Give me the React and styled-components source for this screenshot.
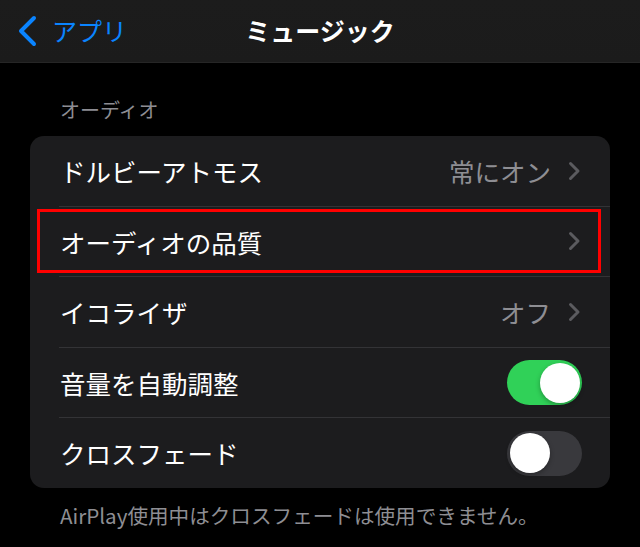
import React, { useState } from "react";
import styled, { createGlobalStyle } from "styled-components";

const GlobalStyle = createGlobalStyle`
  html, body {
    margin: 0;
    padding: 0;
    background: #000;
  }
  body {
    font-family: "Noto Sans CJK JP", "Noto Sans", sans-serif;
    -webkit-font-smoothing: antialiased;
  }
`;

const rows = [
  { label: "ドルビーアトモス", value: "常にオン", type: "link" },
  { label: "オーディオの品質", type: "link", highlight: true },
  { label: "イコライザ", value: "オフ", type: "link" },
  { label: "音量を自動調整", type: "toggle", on: true },
  { label: "クロスフェード", type: "toggle", on: false },
];

const Chevron = () => (
  <svg width="13" height="20" viewBox="0 0 13 20">
    <polyline
      points="2.5,2.5 10,10 2.5,17.5"
      fill="none"
      stroke="#5b5b5f"
      strokeWidth="3"
      strokeLinecap="round"
      strokeLinejoin="round"
    />
  </svg>
);

const BackChevron = () => (
  <svg width="22" height="32" viewBox="0 0 22 32">
    <polyline
      points="18,3 5,16 18,29"
      fill="none"
      stroke="#0a84ff"
      strokeWidth="4"
      strokeLinecap="round"
      strokeLinejoin="round"
    />
  </svg>
);

const App = () => {
  const [toggles, setToggles] = useState({ 3: true, 4: false });

  return (
    <>
      <GlobalStyle />
      <Page>
        <NavBar>
          <BackButton>
            <BackChevron />
            <span>アプリ</span>
          </BackButton>
          <Title>ミュージック</Title>
        </NavBar>

        <SectionHeader>オーディオ</SectionHeader>
        <Card>
          {rows.map((row, i) => (
            <React.Fragment key={row.label}>
              {i > 0 && <Separator />}
              <Row>
                <Label>{row.label}</Label>
                {row.type === "link" ? (
                  <Accessory>
                    {row.value && <Value>{row.value}</Value>}
                    <Chevron />
                  </Accessory>
                ) : (
                  <Toggle
                    $on={toggles[i]}
                    onClick={() => setToggles({ ...toggles, [i]: !toggles[i] })}
                  >
                    <Knob $on={toggles[i]} />
                  </Toggle>
                )}
                {row.highlight && <Highlight />}
              </Row>
            </React.Fragment>
          ))}
        </Card>
        <Footer>AirPlay使用中はクロスフェードは使用できません。</Footer>
      </Page>
    </>
  );
};

export default App;

const Page = styled.div`
  width: 640px;
  height: 547px;
  background: #000;
  overflow: hidden;
`;

const NavBar = styled.div`
  position: relative;
  height: 62px;
  display: flex;
  align-items: center;
  justify-content: center;
  background: linear-gradient(180deg, #1c1c1c 0%, #1b1b1b 100%);
  border-bottom: 1px solid #262626;
`;

const BackButton = styled.div`
  position: absolute;
  left: 16px;
  top: 0;
  bottom: 0;
  display: flex;
  align-items: center;
  gap: 14px;
  color: #0a84ff;
  font-size: 25px;

  span {
    line-height: 1;
    padding-bottom: 2px;
  }
`;

const Title = styled.div`
  color: #fff;
  font-size: 25px;
  font-weight: 700;
  padding-bottom: 2px;
`;

const SectionHeader = styled.div`
  padding: 35px 0 0 60px;
  height: 24px;
  line-height: 24px;
  font-size: 20px;
  color: #8d8d93;
  margin-bottom: 14px;
`;

const Card = styled.div`
  margin: 0 30px;
  background: #1c1c1e;
  border-radius: 14px;
  overflow: hidden;
`;

const Separator = styled.div`
  height: 1px;
  margin-left: 29px;
  background: #333336;
`;

const Row = styled.div`
  position: relative;
  height: 69.6px;
  display: flex;
  align-items: center;
  justify-content: space-between;
  padding: 0 28px 0 30px;
`;

const Label = styled.div`
  color: #fff;
  font-size: 25.5px;
  line-height: 1;
`;

const Accessory = styled.div`
  display: flex;
  align-items: center;
  gap: 17px;
  padding-right: 1px;
`;

const Value = styled.span`
  color: #8e8e93;
  font-size: 25.5px;
  line-height: 1;
`;

const Toggle = styled.div`
  position: relative;
  width: 75px;
  height: 45px;
  border-radius: 23px;
  background: ${(p) => (p.$on ? "#30d158" : "#39393d")};
  cursor: pointer;
`;

const Knob = styled.div`
  position: absolute;
  top: 2.5px;
  left: ${(p) => (p.$on ? "32.5px" : "2.5px")};
  width: 40px;
  height: 40px;
  border-radius: 50%;
  background: #fff;
  box-shadow: 0 2px 5px rgba(0, 0, 0, 0.3);
`;

const Highlight = styled.div`
  position: absolute;
  left: 7px;
  right: 9px;
  top: 2px;
  bottom: 3px;
  border: 3px solid #ff0000;
  pointer-events: none;
`;

const Footer = styled.div`
  padding: 15px 0 0 60px;
  font-size: 20.6px;
  line-height: 24px;
  color: #8e8e93;
`;
